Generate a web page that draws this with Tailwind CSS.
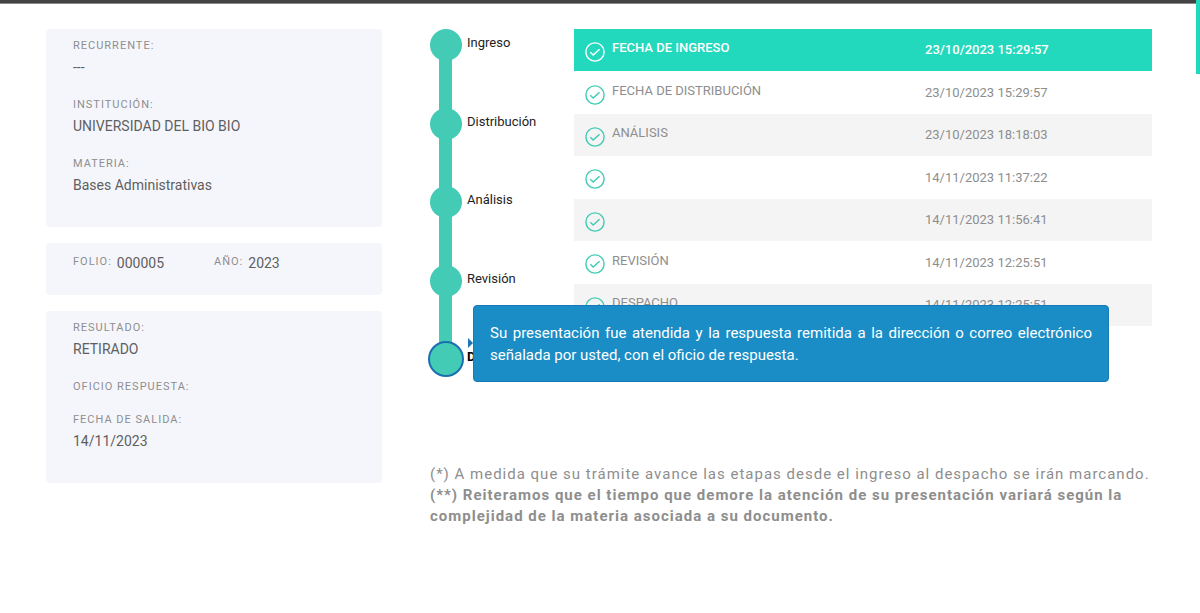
<!DOCTYPE html>
<html lang="es">
<head>
<meta charset="utf-8">
<meta name="viewport" content="width=device-width, initial-scale=1">
<title>Seguimiento de presentación</title>
<script src="https://cdn.jsdelivr.net/npm/@tailwindcss/browser@4"></script>
</head>
<body class="bg-white font-['Roboto',sans-serif] text-[#5f5f5f]">
<svg class="hidden" aria-hidden="true">
  <symbol id="check" viewBox="0 0 20 20" fill="none" stroke="currentColor">
    <circle cx="10" cy="10" r="9.1" stroke-width="1.4"/>
    <path d="M5.3 10.3 8.2 13 14.6 7.2" stroke-width="1.5"/>
  </symbol>
</svg>
<header class="h-1 border-b border-[#8a8a8a] bg-[#444]"></header>
<div class="absolute top-0 right-0 h-[74px] w-1 bg-[#23d9bd]"></div>

<div class="flex gap-12 pt-[25px] pr-12 pl-[46px]">
  <aside class="flex w-84 shrink-0 flex-col gap-4">
    <dl class="flex flex-col gap-4 rounded bg-[#f5f6fc] px-[27px] pt-2 pb-[29px]">
      <div><dt class="text-[11px] leading-[17px] tracking-[1px] text-[#8e8e8e]">RECURRENTE:</dt><dd class="text-[14px] leading-[26px]">---</dd></div>
      <div><dt class="text-[11px] leading-[17px] tracking-[1px] text-[#8e8e8e]">INSTITUCIÓN:</dt><dd class="text-[14px] leading-[26px]">UNIVERSIDAD DEL BIO BIO</dd></div>
      <div><dt class="text-[11px] leading-[17px] tracking-[1px] text-[#8e8e8e]">MATERIA:</dt><dd class="text-[14px] leading-[26px]">Bases Administrativas</dd></div>
    </dl>
    <dl class="grid grid-cols-2 rounded bg-[#f5f6fc] px-[27px] pt-[7px] pb-[19px]">
      <div class="flex gap-[5px]"><dt class="text-[11px] leading-6 tracking-[1px] text-[#8e8e8e]">FOLIO:</dt><dd class="text-[14px] leading-[26px]">000005</dd></div>
      <div class="flex gap-[5px]"><dt class="text-[11px] leading-6 tracking-[1px] text-[#8e8e8e]">AÑO:</dt><dd class="text-[14px] leading-[26px]">2023</dd></div>
    </dl>
    <dl class="flex flex-col gap-4 rounded bg-[#f5f6fc] px-[27px] pt-2 pb-[29px]">
      <div><dt class="text-[11px] leading-[17px] tracking-[1px] text-[#8e8e8e]">RESULTADO:</dt><dd class="text-[14px] leading-[26px]">RETIRADO</dd></div>
      <div><dt class="text-[11px] leading-[17px] tracking-[1px] text-[#8e8e8e]">OFICIO RESPUESTA:</dt><dd></dd></div>
      <div><dt class="text-[11px] leading-[17px] tracking-[1px] text-[#8e8e8e]">FECHA DE SALIDA:</dt><dd class="text-[14px] leading-[26px]">14/11/2023</dd></div>
    </dl>
  </aside>

  <main class="min-w-0 flex-1">
    <div class="flex">
      <div class="relative w-36 shrink-0">
        <div class="absolute top-4 left-[9px] h-[320px] w-[13px] bg-[#43cbb5]"></div>
        <ol class="relative flex h-[346px] flex-col justify-between text-[13px] text-[#222]">
          <li class="flex h-8 gap-[5px]"><span class="size-8 rounded-full bg-[#43cbb5]"></span><span class="leading-7">Ingreso</span></li>
          <li class="flex h-8 gap-[5px]"><span class="size-8 rounded-full bg-[#43cbb5]"></span><span class="leading-7">Distribución</span></li>
          <li class="flex h-8 gap-[5px]"><span class="size-8 rounded-full bg-[#43cbb5]"></span><span class="leading-7">Análisis</span></li>
          <li class="flex h-8 gap-[5px]"><span class="size-8 rounded-full bg-[#43cbb5]"></span><span class="leading-7">Revisión</span></li>
          <li class="relative flex h-8 gap-[5px]"><span class="size-8 rounded-full bg-[#43cbb5] ring-2 ring-[#1a6fb0]"></span><span class="font-bold leading-7 text-black">Despacho</span>
            <div role="tooltip" class="absolute bottom-[-7px] left-[43px] z-10 w-[636px] rounded border border-[#1779b5] bg-[#1a8dc6] px-4 pt-4 pb-[15px] text-justify text-[15px] leading-[22px] text-white">Su presentación fue atendida y la respuesta remitida a la dirección o correo electrónico señalada por usted, con el oficio de respuesta.
              <svg class="absolute top-8 -left-[6px] h-[10px] w-[5px]" viewBox="0 0 5 10" fill="#1a75bb"><path d="M0 0 5 5 0 10Z"/></svg>
            </div>
          </li>
        </ol>
      </div>
      <table class="h-[297px] flex-1 table-fixed border-collapse self-start text-left text-[13px] text-[#8e8e8e]">
        <colgroup><col class="w-[38px]"><col><col class="w-[227px]"></colgroup>
        <tbody>
          <tr class="bg-[#23d9bd] text-white"><th class="pt-1 pl-[11px]"><svg class="size-5"><use href="#check"/></svg></th><th class="pb-1 font-medium">FECHA DE INGRESO</th><th class="font-medium">23/10/2023 15:29:57</th></tr>
          <tr><td class="pt-1 pl-[11px] text-[#43cbb5]"><svg class="size-5"><use href="#check"/></svg></td><td class="pb-1">FECHA DE DISTRIBUCIÓN</td><td>23/10/2023 15:29:57</td></tr>
          <tr class="bg-[#f4f4f4]"><td class="pt-1 pl-[11px] text-[#43cbb5]"><svg class="size-5"><use href="#check"/></svg></td><td class="pb-1">ANÁLISIS</td><td>23/10/2023 18:18:03</td></tr>
          <tr><td class="pt-1 pl-[11px] text-[#43cbb5]"><svg class="size-5"><use href="#check"/></svg></td><td></td><td>14/11/2023 11:37:22</td></tr>
          <tr class="bg-[#f4f4f4]"><td class="pt-1 pl-[11px] text-[#43cbb5]"><svg class="size-5"><use href="#check"/></svg></td><td></td><td>14/11/2023 11:56:41</td></tr>
          <tr><td class="pt-1 pl-[11px] text-[#43cbb5]"><svg class="size-5"><use href="#check"/></svg></td><td class="pb-1">REVISIÓN</td><td>14/11/2023 12:25:51</td></tr>
          <tr class="bg-[#f4f4f4]"><td class="pt-1 pl-[11px] text-[#43cbb5]"><svg class="size-5"><use href="#check"/></svg></td><td class="pb-1">DESPACHO</td><td>14/11/2023 12:25:51</td></tr>
        </tbody>
      </table>
    </div>
    <div class="mt-[89px] text-[15px] leading-[21px] tracking-[1px] text-[#8e8e8e]">
      <p>(*) A medida que su trámite avance las etapas desde el ingreso al despacho se irán marcando.</p>
      <p class="font-bold">(**) Reiteramos que el tiempo que demore la atención de su presentación variará según la complejidad de la materia asociada a su documento.</p>
    </div>
  </main>
</div>
</body>
</html>
